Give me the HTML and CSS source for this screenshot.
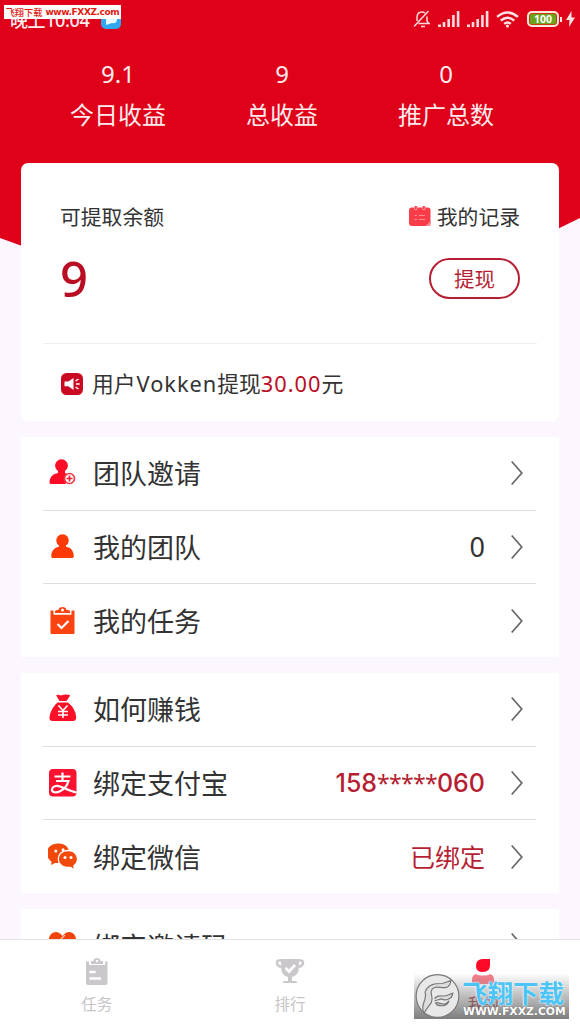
FILE: index.html
```
<!DOCTYPE html>
<html lang="zh-CN">
<head>
<meta charset="utf-8">
<title>我的</title>
<link rel="stylesheet" href="styles.css">
</head>
<body>
<svg width="0" height="0" class="defs">
  <symbol id="chevron" viewBox="0 0 14 26"><path d="M1.7 1.5 11.8 13 1.7 24.5" fill="none" stroke="#666" stroke-width="1.7"/></symbol>
  <symbol id="signal" viewBox="0 0 22 16"><path d="M0 16v-2.5h3V16zM4.7 16v-5h2.6v5zM9.4 16V8H12v8zM14.1 16V4h2.6v12zM18.8 16V0h2.6v16z"/></symbol>
</svg>
<div class="screen">
  <header class="hero">
    <div class="status">
      <span class="time">晚上10:04</span>
      <svg class="app" viewBox="0 0 20 20"><rect width="20" height="20" rx="5" fill="#2fa8ef"/><path d="M5 4h11v7q-1 4-5 3l-6 2z" fill="#e6faff"/></svg>
      <div class="status-icons">
        <svg class="bell" viewBox="0 0 18 18" fill="none" stroke="#ffd9dc" stroke-width="1.5"><path d="M5.500 13.500H17M4 11V7.500q0-5.500 5-5.500 2 0 3 1M14 6.500V11l1.500 2.500M8 16.500h4M1 16.500 15.500 1"/></svg>
        <svg class="sig"><use href="#signal"/></svg>
        <svg class="sig"><use href="#signal"/></svg>
        <svg class="wifi" viewBox="0 0 22 16" fill="none" stroke="#ffe2e4" stroke-width="2.300"><path d="M1 5.500Q11-3 21 5.500M4.500 9Q11 3.500 17.500 9M7.800 12.200Q11 9.500 14.200 12.200"/><circle cx="11" cy="14.200" r="1.500" fill="#ffe2e4" stroke="none"/></svg>
        <span class="battery">100</span><i class="cap"></i>
        <svg class="bolt" viewBox="0 0 9 16"><path d="M5.500 0 0 9h3.500L3 16l6-9.500H5.500z" fill="#ffe2e4"/></svg>
      </div>
    </div>
    <div class="stats">
      <div class="stat"><b>9.1</b><span>今日收益</span></div>
      <div class="stat"><b>9</b><span>总收益</span></div>
      <div class="stat"><b>0</b><span>推广总数</span></div>
    </div>
  </header>
  <main class="content">
    <section class="card balance">
      <div class="line head">
        <span>可提取余额</span>
        <span class="record"><svg viewBox="0 0 22 21"><rect y="1.500" width="21.500" height="18.500" rx="3" fill="#f83c48"/><path d="M5.500 0v2.500a1.300 1.300 0 0 0 2.600 0V0M13.500 0v2.500a1.300 1.300 0 0 0 2.600 0V0" fill="#f83c48" stroke="#ffb0b4" stroke-width=".8"/><path d="M21.500 15v5h-5z" fill="#ff8a8f"/><path d="M5.500 9.500h2.500M10 9.500h6M5.500 13.500h2.500M10 13.500h6" stroke="#ff8f95" stroke-width="1.200"/></svg>我的记录</span>
      </div>
      <div class="line amount"><strong>9</strong><button class="withdraw">提现</button></div>
      <div class="notice">
        <svg viewBox="0 0 22 22"><rect width="22" height="22" rx="5.500" fill="#ca0a25"/><path d="M3.500 8.500h3.800L12.500 5v12l-5.200-3.700H3.500z" fill="#fff"/><path d="m14.500 8 3-2M15 11h3.700M14.500 14l3 2" stroke="#fff" stroke-width="1.400"/></svg>
        <span>用户<span class="name">Vokken</span>提现<em>30.00</em>元</span>
      </div>
    </section>

    <section class="card menu">
      <div class="row"><svg class="ico" viewBox="0 0 30 30"><path d="M10 13a6.400 6.400 0 1 1 7 0v2l5 2a7 7 0 0 0-4 9H3q-1.700 0-1.500-2C2 18.500 5 16 10 15z" fill="#fc0d27"/><circle cx="21.500" cy="20.500" r="5" fill="#fff" stroke="#ee3548" stroke-width="1.600"/><path d="M18.500 20.500h6m-3-3v6" stroke="#ee2036" stroke-width="1.700"/></svg><span class="label">团队邀请</span><svg class="chev"><use href="#chevron"/></svg></div>
      <div class="row"><svg class="ico" viewBox="0 0 30 30"><path d="M4 26q-1-1-.7-3c.7-5.500 4.200-7.500 7.700-8.200v-1.300a6.200 6.200 0 1 1 7 0v1.300c5 .7 7.600 4 7.800 9.200q0 2-1.200 2z" fill="#fb3a05"/></svg><span class="label">我的团队</span><span class="value dark">0</span><svg class="chev"><use href="#chevron"/></svg></div>
      <div class="row"><svg class="ico" viewBox="0 0 30 30"><path d="M2.500 4.500h3v4.200h18V4.500h3V27q0 1-1 1h-22q-1 0-1-1z" fill="#fb4310"/><path d="M7 7V5.500Q7 4 9 4h1.500c0-4 8-4 8 0H20q2 0 2 1.500V7z" fill="#fb4310"/><circle cx="14.500" cy="4" r="1.500" fill="#fff"/><path d="m9.500 18 4 4 7-7" fill="none" stroke="#fff" stroke-width="2.200"/></svg><span class="label">我的任务</span><svg class="chev"><use href="#chevron"/></svg></div>
    </section>

    <section class="card menu">
      <div class="row"><svg class="ico" viewBox="0 0 30 30"><path d="M8.500 2q-1-1.500 2-1.200 3 1 4.500 0 2.500-.8 5 0 3-.3 1.500 1.700L18.500 7h-7z" fill="#fb1027"/><path d="M9.500 8.500h10.500q7.500 6 8.200 14.500 0 4-3 4H4.500q-3.500 0-3-4Q3 14 9.500 8.500z" fill="#fb1027"/><path d="m10.500 11.500 4.500 5 4.500-5M15 16v8m-5-6.500h10M10 21h10" fill="none" stroke="#fff" stroke-width="1.600"/></svg><span class="label">如何赚钱</span><svg class="chev"><use href="#chevron"/></svg></div>
      <div class="row"><svg class="ico" viewBox="0 0 30 30"><rect x="1" y="1" width="27.500" height="27.500" rx="4" fill="#fa1230"/><path d="M6.500 8.500h16M14.500 4.500v8M8 13h12.500q-2 7-8 10c-5 2.500-9 1.500-8.500-1.800.5-3 4.500-4 8-2.700 5 1.800 10 4.500 16.500 6" fill="none" stroke="#fff" stroke-width="2.200"/></svg><span class="label">绑定支付宝</span><span class="value phone">158<i>*****</i>060</span><svg class="chev"><use href="#chevron"/></svg></div>
      <div class="row"><svg class="ico" viewBox="0 0 30 30"><path d="M11 1.500C-3.500 1.500-3.500 15 3.500 19.500L3 23l4-2h7V9h7C20 4 16 1.700 11 1.500z" fill="#f2490b"/><path d="M20 8.500c-12.500 0-13 16-1 16.800h3.500L26.500 28l-.7-4.200C32.500 19 29.500 8.500 20 8.500z" fill="#f2490b" stroke="#fff" stroke-width="1.300"/><circle cx="7.800" cy="9" r="1.500" fill="#fff"/><circle cx="15" cy="7.800" r="1.500" fill="#fff"/><circle cx="17" cy="15.500" r="1.500" fill="#fff"/><circle cx="23" cy="15.500" r="1.500" fill="#fff"/></svg><span class="label">绑定微信</span><span class="value">已绑定</span><svg class="chev"><use href="#chevron"/></svg></div>
    </section>

    <section class="card menu">
      <div class="row"><svg class="ico" viewBox="0 0 30 30"><path d="M14.500 5C9-3 0 2 1 10q1 6 13.500 17Q27 16 28 10C29 2 20-3 14.500 5z" fill="#f2430d"/><path d="m11 10 6-6" stroke="#ffc4ae" stroke-width="1.300"/></svg><span class="label">绑定邀请码</span><svg class="chev"><use href="#chevron"/></svg></div>
    </section>
  </main>
  <nav class="tabs">
    <div class="tab"><svg viewBox="0 0 30 28"><path d="M4 3.500h3V7h16V3.500h2.500V25q0 2-2 2H6q-2 0-2-2z" fill="#cbc8cc"/><path d="M9 6V3h2.500c0-4 7-4 7 0H21v3z" fill="#cbc8cc"/><circle cx="15" cy="3" r="1.200" fill="#fff"/><path d="M7.500 14h6M7.500 20.500H19" stroke="#fff" stroke-width="2.300"/></svg><span>任务</span></div>
    <div class="tab"><svg viewBox="0 0 30 28"><path d="M6 1h18v8q0 8-7 10v4h4q1 0 1 2H8q0-2 1-2h4v-4q-7-2-7-10z" fill="#cbc8cc"/><path d="M6 2.500H4Q2 2.500 2 5t4 4M24 2.500h2q2 0 2 2.500t-4 4" fill="none" stroke="#cbc8cc" stroke-width="2.500"/><path d="m10.500 10 3.500 3.500L20 7" fill="none" stroke="#fff" stroke-width="2.700"/></svg><span>排行</span></div>
    <div class="tab active"><svg viewBox="0 0 30 28"><path d="M8 8Q8 1 15 1h7v6q0 7-7 7T8 8z" fill="#fb0926"/><path d="M8 16q2 1.500 7 1.500t7-1.500q4 1 4 6v4H4v-4q0-5 4-6z" fill="#f66c7a"/></svg><span>我的</span></div>
  </nav>
  <div class="tag"><span>飞翔下载</span> <b>www.FXXZ.com</b></div>
  <div class="site">
    <svg class="seal" viewBox="0 0 48 48"><circle cx="24" cy="24" r="22.300" fill="#e8e8e8" stroke="#777" stroke-width="1.200"/><path d="M10 42c-5-9 4-14 1-22 3-9 12-9 18-9l9-3c-1 7-5 8-11 7-8-1-11 2-9 9 2 9-5 10-8 18zM21 27c3-6 9-1 14-4l5-2c-1 7-8 8-12 6l-7 2m1 2c5-1 8 5 14-2-2 6-8 6-13 4z" fill="#ddd" stroke="#777" stroke-width="1.200"/></svg>
    <div class="site-text"><span>飞翔下载</span><b>WWW.FXXZ.COM</b></div>
  </div>
</div>
</body>
</html>
```
FILE: styles.css
```
* { box-sizing: border-box; }
body { margin: 0; font-family: "Noto Sans", "Noto Sans CJK SC", sans-serif; color: #333; }
svg { display: block; flex: none; }
.defs { position: absolute; }
.screen { position: relative; width: 580px; height: 1031px; overflow: hidden; background: #fcf6fe; display: flex; flex-direction: column; }
.hero { height: 300px; flex: none; background: #df0019; color: #ffecee; clip-path: polygon(0 0, 100% 0, 100% 218px, 78% 280px, 20% 280px, 0 238px); }
.status { display: flex; height: 40px; padding-left: 10px; padding-right: 5px; }
.time { font: 500 18px/40px "Noto Sans", "Noto Sans CJK SC", sans-serif; width: 91px; white-space: nowrap; letter-spacing: -.4px; }
.app { width: 20px; height: 20px; margin-top: 9px; }
.status-icons { display: flex; align-items: center; height: 38px; margin-left: auto; }
.bell { width: 18px; height: 18px; margin-right: 7px; }
.sig { width: 22px; height: 16px; margin-right: 7px; fill: #ffd9dc; }
.wifi { width: 23px; height: 17px; margin-right: 8px; }
.battery { width: 32px; height: 16px; border: 2px solid #ffe9dc; border-radius: 5px; background: #6ba51d; box-shadow: inset 0 0 0 1px #c93b12; font: bold 10.500px/12px "Noto Sans", sans-serif; text-align: center; color: #fff; }
.cap { width: 2px; height: 5px; background: #ffe2e4; margin: 0 4px 0 1px; }
.bolt { width: 9px; height: 16px; }
.stats { display: grid; grid-template-columns: repeat(3, 164px); margin-left: 36px; padding-top: 1px; }
.stat { text-align: center; display: flex; flex-direction: column; }
.stat b { font-weight: 400; font-size: 24px; line-height: 40px; margin-top: 13px; }
.stat span { font-size: 24px; line-height: 40px; padding-top: 1px; }
.content { margin-top: -137px; padding: 0 21px; height: 776px; flex: none; overflow: hidden; display: flex; flex-direction: column; gap: 16px; position: relative; }
.card { background: #fff; flex: none; }
.balance { height: 258px; border-radius: 7px; }
.line { display: flex; justify-content: space-between; align-items: center; padding: 0 39px; }
.head { height: 65px; padding-top: 43px; font-size: 20.800px; line-height: 22px; }
.record { display: flex; align-items: center; gap: 6px; }
.record svg { width: 22px; height: 21px; margin-bottom: 2px; }
.amount { height: 100px; }
.amount strong { color: #b90d24; font-weight: 500; font-size: 49px; line-height: 60px; }
.withdraw { font: 20.500px/36px "Noto Sans CJK SC", sans-serif; width: 91px; height: 41px; padding: 0; background: #fff; border: 2px solid #b61f33; color: #b61f33; border-radius: 21px; }
.notice { display: flex; align-items: center; margin: 15px 22px 0; border-top: 1px solid #efefef; height: 78px; padding: 2px 0 0 18px; gap: 9px; font-size: 21.800px; line-height: 34px; }
.notice svg { width: 22px; height: 22px; }
.notice .name { letter-spacing: .95px; margin-left: 1px; }
.notice em { font-style: normal; color: #b90d24; letter-spacing: 1px; }
.menu { padding: 0 23px 0 22px; height: 220px; }
.row { display: flex; align-items: center; height: 73.700px; border-bottom: 1px solid #dedede; padding-right: 12px; }
.row:last-child { border-bottom: 0; }
.ico { width: 30px; height: 30px; margin-left: 5px; margin-right: 15px; }
.label { font-size: 27px; line-height: 40px; white-space: nowrap; padding-top: 2px; }
.chev { width: 14px; height: 26px; margin-left: auto; margin-bottom: 1px; }
.value { margin-left: auto; margin-right: 25px; font-size: 25px; line-height: 38px; color: #b61f33; }
.value + .chev { margin-left: 0; }
.value.dark { color: #333; font-size: 27px; }
.value.phone { font: 500 25px/38px Inter, sans-serif; white-space: nowrap; }
.phone i { font: 400 23px/20px "Noto Sans", sans-serif; letter-spacing: -.7px; }
.tabs { position: relative; height: 92px; flex: none; background: #fff; border-top: 1px solid #e3e2e3; display: grid; grid-template-columns: repeat(3, 1fr); }
.tab { display: flex; flex-direction: column; align-items: center; padding-top: 18px; font-size: 15.500px; line-height: 22px; color: #c8c4c8; }
.tab svg { width: 30px; height: 28px; margin-bottom: 7px; }
.tab.active { color: #b84150; }
.tag { position: absolute; left: 4px; top: 5px; width: 117px; height: 14px; background: #fff; color: #e01a10; font: 500 9.200px/15px "Noto Sans CJK SC", sans-serif; white-space: nowrap; display: flex; justify-content: center; gap: 3px; }
.tag b { font: bold 9px/15px "DejaVu Sans", sans-serif; letter-spacing: -.4px; }
.site { position: absolute; left: 414px; top: 973px; width: 155px; height: 46px; display: flex; background: linear-gradient(rgba(255,255,255,.15), rgba(90,90,90,.78)); }
.seal { width: 47px; height: 46px; }
.site-text { display: flex; flex-direction: column; padding-top: 4px; }
.site-text span { font: bold 25.500px/30px "Noto Sans CJK SC", sans-serif; color: #4cc4f5; text-shadow: 0 0 2px #fff, 0 0 1px #fff; white-space: nowrap; height: 29px; margin-left: 1px; }
.site-text b { font: bold 10.800px/12px "DejaVu Sans", sans-serif; color: #fff; margin-left: 2px; letter-spacing: 0; white-space: nowrap; text-shadow: 0 0 1px #555; }
```
